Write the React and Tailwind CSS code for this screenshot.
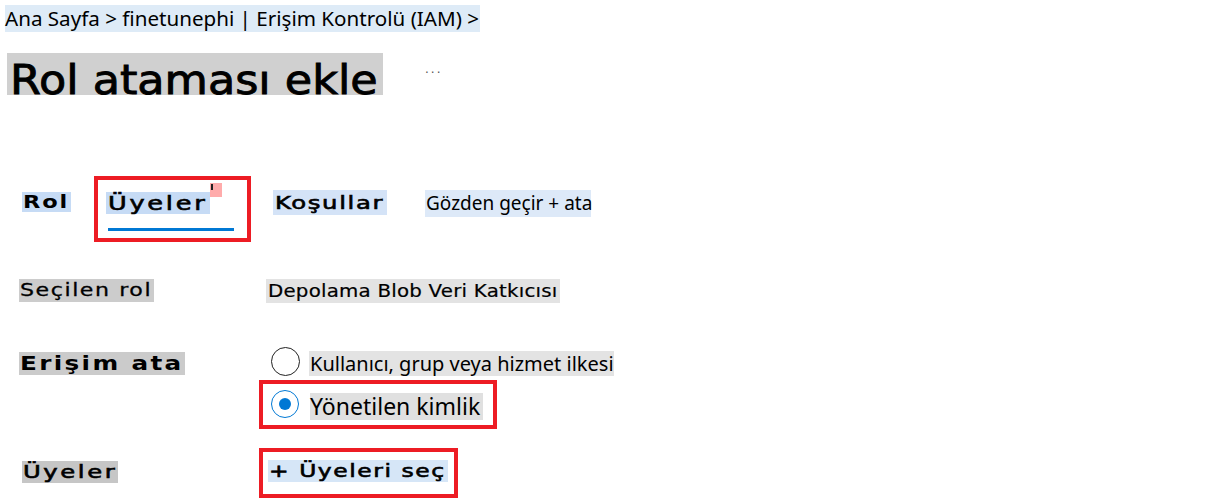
function Radio({ checked }) {
  if (checked) {
    return (
      <span className="flex items-center justify-center w-[28px] h-[28px] rounded-full border-[1.5px] border-[#0078d4] shrink-0">
        <span className="w-[12px] h-[12px] rounded-full bg-[#0078d4]" />
      </span>
    )
  }
  return <span className="block w-[29px] h-[29px] rounded-full border-[1.5px] border-[#222] shrink-0" />
}

export default function App() {
  return (
    <div className="w-[1212px] h-[499px] bg-white text-black overflow-hidden font-['DejaVu_Sans',sans-serif]">
      {/* breadcrumb */}
      <div className="pt-[5px] pl-[5px]">
        <div className="w-[475px] h-[27px] bg-[#deebf7] text-[20.6px] leading-[27px] whitespace-nowrap font-['Noto_Sans',sans-serif]">
          Ana Sayfa &gt; finetunephi | Erişim Kontrolü (IAM) &gt;
        </div>
      </div>

      {/* title */}
      <div className="flex items-start mt-[21px] ml-[7px]">
        <div className="w-[376px] h-[42px] bg-[#d0d0d0] overflow-hidden pl-[3px] pt-[3px]">
          <span className="inline-block origin-left scale-x-[1.085] text-[41px] leading-[48px] whitespace-nowrap [-webkit-text-stroke:0.9px]">
            Rol ataması ekle
          </span>
        </div>
        <div className="ml-[42px] mt-[10px] text-[12px] leading-[12px] tracking-[2px] text-[#555]">...</div>
      </div>

      {/* tabs */}
      <div className="flex items-start mt-[81px] h-[66px]">
        <div className="ml-[22px] mt-[16px] w-[49px] h-[20px] bg-[#c6dbf5] flex items-center pl-[1px]">
          <span className="inline-block origin-left scale-x-[1.25] text-[18px] leading-none font-bold tracking-[1.5px] whitespace-nowrap">
            Rol
          </span>
        </div>
        <div className="ml-[23px] w-[157px] h-[66px] border-[4px] border-[#ed1c24] relative">
          <div className="absolute left-[8px] top-[12px] w-[104px] h-[22px] bg-[#c6dbf5] flex items-center pl-[2px]">
            <span className="inline-block origin-left scale-x-[1.35] text-[19px] leading-none tracking-[2px] whitespace-nowrap [-webkit-text-stroke:0.6px]">
              Üyeler
            </span>
          </div>
          <div className="absolute left-[112px] top-[3px] w-[12px] h-[14px] bg-[#ffabab]">
            <span className="absolute left-[1px] top-[1px] w-[2px] h-[6px] bg-[#222]" />
          </div>
          <div className="absolute left-[10px] top-[48px] w-[126px] h-[3px] bg-[#0078d4]" />
        </div>
        <div className="ml-[22px] mt-[14px] w-[114px] h-[25px] bg-[#d4e3f7] flex items-center pl-[2px]">
          <span className="inline-block origin-left scale-x-[1.35] text-[18px] leading-none tracking-[1.2px] whitespace-nowrap [-webkit-text-stroke:0.6px]">
            Koşullar
          </span>
        </div>
        <div className="ml-[38px] mt-[14px] w-[166px] h-[27px] bg-[#dde9f8] flex items-center pl-[1px]">
          <span className="text-[19px] leading-none whitespace-nowrap font-['Noto_Sans',sans-serif]">Gözden geçir + ata</span>
        </div>
      </div>

      {/* selected role */}
      <div className="flex items-start mt-[37px] h-[68px]">
        <div className="ml-[19px] w-[240px]">
          <div className="w-[135px] h-[23px] bg-[#cccccc] flex items-center pl-[1px]">
            <span className="inline-block origin-left scale-x-[1.3] text-[17px] leading-none tracking-[1.2px] whitespace-nowrap [-webkit-text-stroke:0.3px]">
              Seçilen rol
            </span>
          </div>
        </div>
        <div className="ml-[7px] w-[294px] h-[24px] bg-[#e3e3e3] flex items-center pl-[2px]">
          <span className="inline-block origin-left scale-x-[1.1] text-[18px] leading-none tracking-[0.2px] whitespace-nowrap [-webkit-text-stroke:0.2px]">
            Depolama Blob Veri Katkıcısı
          </span>
        </div>
      </div>

      {/* assign access */}
      <div className="flex items-start">
        <div className="ml-[19px] w-[240px] pt-[5px]">
          <div className="w-[166px] h-[23px] bg-[#cbcbcb] flex items-center pl-[1px]">
            <span className="inline-block origin-left scale-x-[1.3] text-[19px] leading-none font-bold tracking-[1.8px] whitespace-nowrap">
              Erişim ata
            </span>
          </div>
        </div>
        <div className="flex flex-col">
          <div className="flex items-start h-[29px]">
            <div className="ml-[12px]">
              <Radio />
            </div>
            <div className="ml-[9px] mt-[4px] w-[305px] h-[25px] bg-[#e3e3e3] flex items-center pl-[1px]">
              <span className="text-[20px] leading-none whitespace-nowrap font-['Noto_Sans',sans-serif]">
                Kullanıcı, grup veya hizmet ilkesi
              </span>
            </div>
          </div>
          <div className="mt-[4px] w-[238px] h-[49px] border-[4px] border-[#ed1c24] flex items-start">
            <div className="ml-[8px] mt-[6px]">
              <Radio checked />
            </div>
            <div className="ml-[11px] mt-[9px] w-[173px] h-[27px] bg-[#e0e0e0] flex items-center">
              <span className="text-[23px] leading-none whitespace-nowrap font-['Noto_Sans',sans-serif]">Yönetilen kimlik</span>
            </div>
          </div>
        </div>
      </div>

      {/* members */}
      <div className="flex items-start mt-[19px]">
        <div className="ml-[19px] w-[240px] pt-[13px]">
          <div className="ml-[3px] w-[96px] h-[22px] bg-[#c6c6c6] flex items-center pl-[1px]">
            <span className="inline-block origin-left scale-x-[1.35] text-[18px] leading-none tracking-[1.9px] whitespace-nowrap [-webkit-text-stroke:0.6px]">
              Üyeler
            </span>
          </div>
        </div>
        <div className="w-[199px] h-[50px] border-[4px] border-[#ed1c24]">
          <div className="ml-[5px] mt-[8px] w-[180px] h-[22px] bg-[#d6e6f7] flex items-center pl-[1px]">
            <span className="inline-block origin-left scale-x-[1.3] text-[18px] leading-none tracking-[1.2px] whitespace-nowrap [-webkit-text-stroke:0.6px]">
              + Üyeleri seç
            </span>
          </div>
        </div>
      </div>
    </div>
  )
}
